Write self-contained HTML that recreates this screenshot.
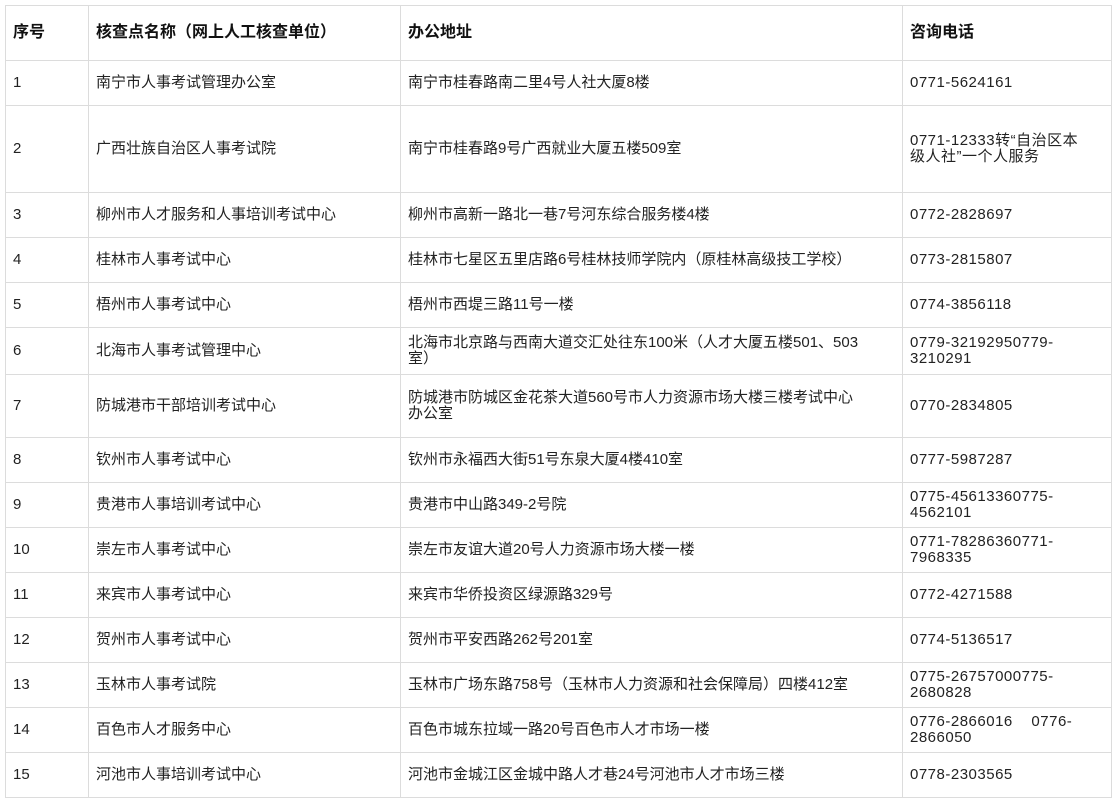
<!DOCTYPE html>
<html><head><meta charset="utf-8"><style>
html,body{margin:0;padding:0;background:#fff;width:1115px;height:803px;overflow:hidden}
table{position:absolute;left:5px;top:5px;border-collapse:collapse;table-layout:fixed;width:1106px;
font-family:"Liberation Sans","Noto Sans CJK SC",sans-serif;font-size:15px;color:#222;line-height:16px}
td{border:1px solid #dcdcdc;padding:0 7px;vertical-align:middle;box-sizing:border-box;white-space:nowrap;overflow:hidden}
td:nth-child(4){letter-spacing:0.5px}
th{border:1px solid #dcdcdc;padding:0 7px;text-align:left;font-weight:bold;font-size:16px;color:#111}
</style></head><body>
<table>
<colgroup><col style="width:83px"><col style="width:312px"><col style="width:502px"><col style="width:209px"></colgroup>
<tr style="height:55px"><th>序号</th><th>核查点名称（网上人工核查单位）</th><th>办公地址</th><th>咨询电话</th></tr>
<tr style="height:45px"><td>1</td><td>南宁市人事考试管理办公室</td><td>南宁市桂春路南二里4号人社大厦8楼</td><td>0771-5624161</td></tr>
<tr style="height:87px"><td>2</td><td>广西壮族自治区人事考试院</td><td>南宁市桂春路9号广西就业大厦五楼509室</td><td>0771-12333转“自治区本<br>级人社”一个人服务</td></tr>
<tr style="height:45px"><td>3</td><td>柳州市人才服务和人事培训考试中心</td><td>柳州市高新一路北一巷7号河东综合服务楼4楼</td><td>0772-2828697</td></tr>
<tr style="height:45px"><td>4</td><td>桂林市人事考试中心</td><td>桂林市七星区五里店路6号桂林技师学院内（原桂林高级技工学校）</td><td>0773-2815807</td></tr>
<tr style="height:45px"><td>5</td><td>梧州市人事考试中心</td><td>梧州市西堤三路11号一楼</td><td>0774-3856118</td></tr>
<tr style="height:47px"><td>6</td><td>北海市人事考试管理中心</td><td>北海市北京路与西南大道交汇处往东100米（人才大厦五楼501、503<br>室）</td><td>0779-32192950779-<br>3210291</td></tr>
<tr style="height:63px"><td>7</td><td>防城港市干部培训考试中心</td><td>防城港市防城区金花茶大道560号市人力资源市场大楼三楼考试中心<br>办公室</td><td>0770-2834805</td></tr>
<tr style="height:45px"><td>8</td><td>钦州市人事考试中心</td><td>钦州市永福西大街51号东泉大厦4楼410室</td><td>0777-5987287</td></tr>
<tr style="height:45px"><td>9</td><td>贵港市人事培训考试中心</td><td>贵港市中山路349-2号院</td><td>0775-45613360775-<br>4562101</td></tr>
<tr style="height:45px"><td>10</td><td>崇左市人事考试中心</td><td>崇左市友谊大道20号人力资源市场大楼一楼</td><td>0771-78286360771-<br>7968335</td></tr>
<tr style="height:45px"><td>11</td><td>来宾市人事考试中心</td><td>来宾市华侨投资区绿源路329号</td><td>0772-4271588</td></tr>
<tr style="height:45px"><td>12</td><td>贺州市人事考试中心</td><td>贺州市平安西路262号201室</td><td>0774-5136517</td></tr>
<tr style="height:45px"><td>13</td><td>玉林市人事考试院</td><td>玉林市广场东路758号（玉林市人力资源和社会保障局）四楼412室</td><td>0775-26757000775-<br>2680828</td></tr>
<tr style="height:45px"><td>14</td><td>百色市人才服务中心</td><td>百色市城东拉域一路20号百色市人才市场一楼</td><td>0776-2866016&nbsp;&nbsp;&nbsp;&nbsp;0776-<br>2866050</td></tr>
<tr style="height:45px"><td>15</td><td>河池市人事培训考试中心</td><td>河池市金城江区金城中路人才巷24号河池市人才市场三楼</td><td>0778-2303565</td></tr>
</table>
</body></html>
